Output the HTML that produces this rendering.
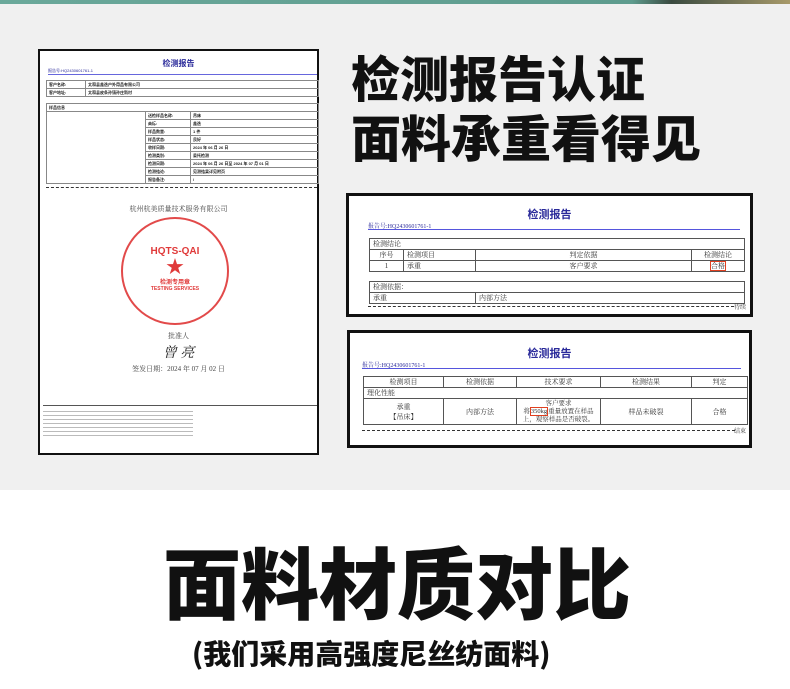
<!DOCTYPE html>
<html><head><meta charset="utf-8"><style>
*{margin:0;padding:0;box-sizing:border-box}
body{width:790px;height:689px;overflow:hidden;background:#fff;font-family:"Liberation Sans","Noto Sans CJK SC",sans-serif;position:relative}
.top{position:absolute;left:0;top:0;width:790px;height:4px;background:linear-gradient(90deg,#6aa89a,#5e9c8e 80%,#3a4a40 85%,#a89a6a)}
.bg{position:absolute;left:0;top:4px;width:790px;height:486px;background:#f0f0f0}
.doc{position:absolute;background:#fff;border:2px solid #111}
.s{font-family:"Liberation Serif","Noto Serif CJK SC",serif}
.blue{color:#2a2a9a}
.h{position:absolute;font-weight:900;color:#111;font-family:"Noto Sans CJK SC",sans-serif;white-space:nowrap}
table{border-collapse:collapse;position:absolute}
td{border:1px solid #555;font-size:7px;padding:0 3px;height:10px;color:#333}
.sm td{font-size:4px;height:8px;padding:0 2px;border-color:#888;font-weight:bold;color:#222}
</style></head><body>
<div class="top"></div><div class="bg"></div>

<div class="doc" style="left:38px;top:49px;width:281px;height:406px">
 <div class="blue" style="position:absolute;left:0;width:100%;top:7px;text-align:center;font-size:8px;font-weight:bold">检测报告</div>
 <div class="blue" style="position:absolute;left:8px;top:17px;font-size:4px">报告号:HQ2430601761-1</div>
 <div style="position:absolute;left:8px;right:0;top:23px;border-top:1px solid #6666dd"></div>
 <table class="sm" style="left:6px;top:29px;width:273px">
  <tr><td style="width:39px">客户名称:</td><td>太和县鑫逸户外用品有限公司</td></tr>
  <tr><td>客户地址:</td><td>太和县皮条孙镇孙庄新村</td></tr>
 </table>
 <table class="sm" style="left:6px;top:52px;width:273px">
  <tr><td colspan="3">样品信息</td></tr>
  <tr><td rowspan="9" style="width:99px"></td><td style="width:45px">送检样品名称:</td><td>吊床</td></tr>
  <tr><td>商标:</td><td>鑫逸</td></tr>
  <tr><td>样品数量:</td><td>1 件</td></tr>
  <tr><td>样品状态:</td><td>良好</td></tr>
  <tr><td>收样日期:</td><td>2024 年 06 月 26 日</td></tr>
  <tr><td>检测类别:</td><td>委托检测</td></tr>
  <tr><td>检测日期:</td><td>2024 年 06 月 26 日至 2024 年 07 月 01 日</td></tr>
  <tr><td>检测结论:</td><td>见测结果详见附页</td></tr>
  <tr><td>报告备注:</td><td>/</td></tr>
 </table>
 <div style="position:absolute;left:6px;right:0;top:136px;border-top:1px dashed #333"></div>
 <div class="s" style="position:absolute;left:0;width:100%;top:153px;text-align:center;font-size:7px;color:#444">杭州杭美质量技术服务有限公司</div>
 <div style="position:absolute;left:81px;top:166px;width:108px;height:108px;border:2px solid #e24a4a;border-radius:50%;color:#e03a3a;text-align:center">
  <div style="margin-top:27px;font-size:10px;font-weight:bold">HQTS-QAI</div>
  <div style="font-size:18px;line-height:20px">★</div>
  <div style="font-size:6px;font-weight:bold">检测专用章</div>
  <div style="font-size:5px;font-weight:bold">TESTING SERVICES</div>
 </div>
 <div class="s" style="position:absolute;left:0;width:100%;top:280px;text-align:center;font-size:7px;color:#444">批准人</div>
 <div class="s" style="position:absolute;left:0;width:100%;top:291px;text-align:center;font-size:14px;color:#222;font-style:italic">曾 亮</div>
 <div class="s" style="position:absolute;left:0;width:100%;top:313px;text-align:center;font-size:7px;color:#444">签发日期：2024 年 07 月 02 日</div>
 <div style="position:absolute;left:3px;right:0;top:354px;border-top:1px solid #555"></div>
 <div style="position:absolute;left:3px;top:357px;width:150px;height:30px;background:repeating-linear-gradient(#fff 0 3px,#bbb 3px 4px)"></div>
</div>

<div class="doc" style="left:346px;top:193px;width:407px;height:124px;border-width:3px">
 <div class="blue" style="position:absolute;left:0;width:100%;top:10px;text-align:center;font-size:11px;font-weight:bold">检测报告</div>
 <div class="blue s" style="position:absolute;left:19px;top:25px;font-size:6px">报告号:HQ2430601761-1</div>
 <div style="position:absolute;left:19px;right:10px;top:33px;border-top:1.5px solid #5555dd"></div>
 <table class="s" style="left:20px;top:42px;width:376px">
  <tr><td colspan="4">检测结论</td></tr>
  <tr><td style="width:34px;text-align:center">序号</td><td style="width:72px">检测项目</td><td style="text-align:center">判定依据</td><td style="width:53px;text-align:center">检测结论</td></tr>
  <tr><td style="text-align:center">1</td><td>承重</td><td style="text-align:center">客户要求</td><td style="text-align:center"><span style="border:1px solid #e04020">合格</span></td></tr>
 </table>
 <table class="s" style="left:20px;top:85px;width:376px">
  <tr><td colspan="2">检测依据：</td></tr>
  <tr><td style="width:106px">承重</td><td>内部方法</td></tr>
 </table>
 <div style="position:absolute;left:19px;right:16px;top:110px;border-top:1px dashed #333"></div>
 <div class="s" style="position:absolute;right:4px;top:106px;font-size:6px;color:#333">待续</div>
</div>

<div class="doc" style="left:347px;top:330px;width:405px;height:118px;border-width:3px">
 <div class="blue" style="position:absolute;left:0;width:100%;top:12px;text-align:center;font-size:11px;font-weight:bold">检测报告</div>
 <div class="blue s" style="position:absolute;left:12px;top:27px;font-size:6px">报告号:HQ2430601761-1</div>
 <div style="position:absolute;left:12px;right:8px;top:35px;border-top:1.5px solid #5555dd"></div>
 <table class="s" style="left:13px;top:43px;width:385px">
  <tr><td style="width:80px;text-align:center">检测项目</td><td style="width:73px;text-align:center">检测依据</td><td style="width:84px;text-align:center">技术要求</td><td style="width:91px;text-align:center">检测结果</td><td style="text-align:center">判定</td></tr>
  <tr><td colspan="5">理化性能</td></tr>
  <tr><td style="text-align:center;height:26px">承重<br>【吊床】</td><td style="text-align:center">内部方法</td><td style="text-align:center;line-height:8px;font-size:6.5px;padding:0 1px;white-space:nowrap">客户要求<br>将<span style="border:1px solid #e04020">350kg</span>重量放置在样品<br>上，观察样品是否破裂。</td><td style="text-align:center">样品未破裂</td><td style="text-align:center">合格</td></tr>
 </table>
 <div style="position:absolute;left:12px;right:14px;top:97px;border-top:1px dashed #333"></div>
 <div class="s" style="position:absolute;right:3px;top:93px;font-size:6px;color:#333">结束</div>
</div>

<div class="h" style="left:351px;top:46px;font-size:49px;line-height:62px">检测报告认证</div>
<div class="h" style="left:351px;top:105px;font-size:50px;line-height:62px">面料承重看得见</div>
<div class="h" style="left:163px;top:530px;font-size:78px;line-height:100px">面料材质对比</div>
<div class="h" style="left:192px;top:634px;font-size:28px;line-height:38px">(我们采用高强度尼丝纺面料)</div>
</body></html>
